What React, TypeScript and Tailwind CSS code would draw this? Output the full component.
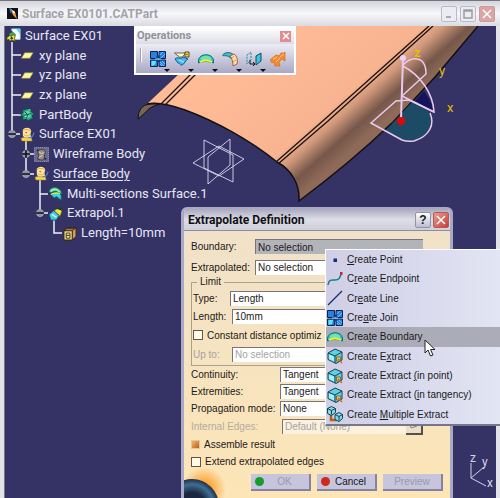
import React from "react"

type IconProps = { kind: string; className?: string };

// Small 16x16 drawings shared by the tree, the toolbar and the context menu
const Icon = ({ kind, className = "h-4 w-4" }: IconProps) => (
  <svg viewBox="0 0 16 16" className={`${className} shrink-0`} fill="none" aria-hidden="true">
    {kind === "part" && (
      <>
        <path d="M6 1h9v11H9z" fill="#fff" stroke="#9fe8f0" />
        <path d="M11 1h4v6z" fill="#5bd6e6" />
        <path d="M3 6l4-2 3 3-2 3-4 0z" fill="#3fae5c" stroke="#14402a" strokeWidth=".6" />
        <path d="M1 10l3-2 2 1 1-2 3 1-1 3 1 3-4-1-2 1-1-2-2 1z" fill="#e8e038" stroke="#45460c" strokeWidth=".8" />
        <circle cx="6" cy="11" r="1.3" fill="#2f3160" />
      </>
    )}
    {kind === "plane" && <path d="M5 5h9l-3.500 6H1.500z" fill="#fbf79a" stroke="#8e8c3a" strokeWidth=".7" />}
    {kind === "body" && (
      <>
        <path d="M7 1l2 2 3-1 0 3 3 2-2 2 1 4-3 0-2 2-2-2-4 1 0-4-2-2 2-2 0-4 3 1z" fill="#28a582" stroke="#0c4644" />
        <path d="M5 5l4-1 3 3-1 4-4 1-3-4z" fill="#59d9a8" />
        <path d="M5 5l3 3 4-1M8 8l-1 4M8 8l-4 1" stroke="#123f4a" />
        <path d="M9 3h2M5 10h2" stroke="#c4f59b" />
      </>
    )}
    {kind === "geoset" && (
      <>
        <path d="M3 3c2-3 8-3 9 1l-1 4c1 1 1 4-1 6H3c2-2 1-4 0-5z" fill="#fbe7a1" />
        <path d="M3 4c3-2 6-2 9 1M4 8c2 2 5 2 7 0" stroke="#e9a83b" />
        <path d="M5 6l2-1 1 2z" fill="#da473d" />
        <path d="M1 12c3-2 7 1 11-1l1 4H2z" fill="#f7d94a" stroke="#8d7532" strokeWidth=".6" />
        <path d="M9 11c3 1 5-1 6-5" stroke="#4f83d6" strokeWidth="1.300" />
      </>
    )}
    {kind === "wireframe" && (
      <>
        <rect x=".5" y=".5" width="15" height="15" fill="#69698f" stroke="#a6a6c0" strokeDasharray="1 1" />
        <path d="M4 5c1-3 7-3 8 0l-1 5c1 2-1 4-3 4l-4-1 1-4z" fill="#9a8a86" stroke="#38364f" />
        <path d="M5 5l3 2 3-1M5 11l4-2" stroke="#e6d4b0" />
        <path d="M3 3l2 1M11 12l2 1" stroke="#1e1d3c" strokeWidth="1.500" />
      </>
    )}
    {kind === "sections" && (
      <>
        <path d="M1 6c2-6 11-6 14 2l-4-1c-2-2-5-2-7 0z" fill="#8af0a0" stroke="#0f6a78" />
        <path d="M4 10c2-4 8-4 10 0v5l-3-2c-1-2-3-2-4 0z" fill="#43d5dd" stroke="#0f6a78" />
        <path d="M3 9c3-2 7-2 10-1" stroke="#eef84e" strokeWidth="1.300" />
      </>
    )}
    {kind === "extrapol" && (
      <>
        <path d="M5 6l6-4 4 3-2 6-6 0z" fill="#efe43a" stroke="#56520c" strokeWidth=".7" />
        <path d="M9 3l2-2 3 1 1 3z" fill="#1d3f1c" />
        <path d="M1 9l5-4 6 5-3 5-6 0z" fill="#44cbe0" stroke="#164a78" />
        <path d="M4 9l5 3" stroke="#d7fbff" strokeWidth="1.500" />
      </>
    )}
    {kind === "param" && (
      <>
        <path d="M2 5l4-3h9v9l-4 4H2z" fill="#c99a68" stroke="#33230f" />
        <path d="M2 5h9v10M11 5l4-3M5 3h8" stroke="#33230f" />
        <path d="M3 6h7v8H3z" fill="#ece69a" />
        <path d="M4.500 7.500h4v5.500h-4zM4.500 10h4" stroke="#3f3711" />
      </>
    )}
    {kind === "join" && (
      <>
        <path d="M.5.500h7v7h-7zM9 .5h6.500v7H9zM.5 9h7v6.500h-7zM9 9h6.500v6.500H9z" fill="#2a80dc" stroke="#0a2450" />
        <path d="M1.500 10h4.500l-1 4-3.500 1z" fill="#5beaf5" />
        <path d="M10 4l3-3M11 7l4-4M10 11l4 4M12 10l3 3M10 13l2 2" stroke="#62c6f4" />
        <path d="M8 4l2 2-2 2-2-2zM8 8l2 2-2 2-2-2z" fill="#0b3f8a" />
        <path d="M5 8h6" stroke="#cfeaff" strokeWidth=".8" />
      </>
    )}
    {kind === "split" && (
      <>
        <path d="M1 8c3-3 5 1 8-2l5 2c-3 1-3 5-6 6-2 1-3-3-4-2z" fill="#48b9e8" stroke="#155aa0" />
        <path d="M5 9l5 2" stroke="#baf1ff" />
        <path d="M.5 2h11l-3 4-3 0z" fill="#fff7cf" stroke="#4b4930" strokeWidth=".8" />
        <path d="M11 1h4v5h-4z" fill="#e9d54d" stroke="#4b4200" strokeWidth=".9" />
        <path d="M12.500 3h1v1h-1z" fill="#222" />
      </>
    )}
    {kind === "boundary" && (
      <>
        <path d="M.5 12V9c1-7 14-7 15 0v3c-4-2-11-2-15 0z" fill="#32c6cf" stroke="#11707e" />
        <path d="M3 7c3-3 7-3 10 0v2H3z" fill="#74e59f" />
        <path d="M2 11c4-2 8-2 12 0" stroke="#f2ee3c" strokeWidth="2" />
      </>
    )}
    {kind === "extractCurve" && (
      <>
        <path d="M.5 4c4-4 9-3 12 1l-4 2c-2-2-5-3-7-2z" fill="#37bfd1" stroke="#26505b" strokeWidth=".8" />
        <path d="M8 5l4-2c3 2 4 6 3 10l-4 2c0-4-1-8-3-10z" fill="#f8e5a2" stroke="#a03a3a" strokeWidth=".8" />
        <path d="M12 5l-2 2M14 9l-3 2" stroke="#d69b62" />
      </>
    )}
    {kind === "translate" && (
      <>
        <path d="M1 4l4-3v8l-4 4z" stroke="#2d8aa3" strokeDasharray="2 1" />
        <path d="M10 5l5-3v8l-5 4z" fill="#3fc5dd" stroke="#134a5a" />
        <path d="M4 9v4h4M7 11l2 2-2 2" stroke="#111" />
      </>
    )}
    {kind === "orange" && (
      <>
        <path d="M0 9l6-5 3 1 2-3h3l1-1 0 9-3-2-3 3 1 4-5 0-1-4-2 1z" fill="#f58a2e" stroke="#d96a18" strokeWidth=".7" />
        <path d="M3 8l4-2M6 11l4-4M10 6l4-3" stroke="#ffc88a" />
      </>
    )}
    {kind === "point" && <path d="M6.500 6.500h3.500v3.500h-3.500z" fill="#0c2f78" />}
    {kind === "endpoint" && (
      <>
        <path d="M1 14c1-6 4-5 7-5 4 0 5-2 6-6" stroke="#15808a" strokeWidth="1.500" />
        <path d="M13 1h2.500v3H13z" fill="#d02036" />
      </>
    )}
    {kind === "line" && <path d="M1 15L15 1" stroke="#0e2c70" strokeWidth="1.300" />}
    {kind === "extract" && (
      <>
        <path d="M1 5l7-4 7 3v8l-6 3.500-8-4z" fill="#62cfe0" stroke="#17424e" />
        <path d="M1 5l7 3 7-4M8 8v7" stroke="#17424e" />
        <path d="M2 6.500l5 2v5l-5-2.500z" fill="#a6eef5" />
        <path d="M9.500 9h4v4h-4z" fill="#e8c66a" stroke="#6b4d19" strokeWidth=".7" />
        <path d="M11 11l4 4" stroke="#c8702c" strokeWidth="1.600" />
      </>
    )}
    {kind === "multi" && (
      <>
        <path d="M4 8v6h6" stroke="#b35f1d" strokeWidth="2.500" />
        <path d="M.5 2.500l4-2 4 2v4l-4 3-4-2z" fill="#7fdbe9" stroke="#17424e" />
        <path d="M.5 2.500l4 2 4-2M4.500 4.500v4" stroke="#17424e" />
        <path d="M8 8.500l4-2 3.500 2v4l-3.500 3-4-2z" fill="#7fdbe9" stroke="#17424e" />
        <path d="M8 8.500l4 2 3.500-2M12 10.500v4" stroke="#17424e" />
      </>
    )}
  </svg>
);

const treeItems = [
  { label: "Surface EX01", icon: "part", indent: "pl-px" },
  { label: "xy plane", icon: "plane", indent: "pl-[15px]" },
  { label: "yz plane", icon: "plane", indent: "pl-[15px]" },
  { label: "zx plane", icon: "plane", indent: "pl-[15px]" },
  { label: "PartBody", icon: "body", indent: "pl-[15px]" },
  { label: "Surface EX01", icon: "geoset", indent: "pl-[15px]" },
  { label: "Wireframe Body", icon: "wireframe", indent: "pl-[29px]" },
  { label: "Surface Body", icon: "geoset", indent: "pl-[29px]", active: true },
  { label: "Multi-sections Surface.1", icon: "sections", indent: "pl-[43px]" },
  { label: "Extrapol.1", icon: "extrapol", indent: "pl-[43px]" },
  { label: "Length=10mm", icon: "param", indent: "pl-[57px]" },
];

// "key" is the position of the underlined access letter
const menuItems = [
  { label: "Create Point", icon: "point", key: 0 },
  { label: "Create Endpoint", icon: "endpoint", key: 1 },
  { label: "Create Line", icon: "line", key: 2 },
  { label: "Create Join", icon: "join", key: 3 },
  { label: "Create Boundary", icon: "boundary", key: 4, active: true },
  { label: "Create Extract", icon: "extract", key: 8 },
  { label: "Create Extract (in point)", icon: "extract", key: 15 },
  { label: "Create Extract (in tangency)", icon: "extract", key: 16 },
  { label: "Create Multiple Extract", icon: "multi", key: 7 },
];

const tools = ["join", "split", "boundary", "extractCurve", "translate", "orange"];

const Scene = () => (
  <svg viewBox="5 26 491 472" className="absolute left-0 top-0 h-[472px] w-[491px]" fill="none" aria-hidden="true">
    <defs>
      <linearGradient id="skin" gradientUnits="userSpaceOnUse" x1="132" y1="150" x2="228" y2="259">
        <stop offset="0" stopColor="#ffbb96" />
        <stop offset=".69" stopColor="#f8b391" />
        <stop offset=".78" stopColor="#cf987b" />
        <stop offset=".9" stopColor="#76574a" />
        <stop offset="1" stopColor="#8f6a58" />
      </linearGradient>
    </defs>

    {/* Extruded surface */}
    <path d="M147 104L230 26H478L435 77L393 122Q350 163 299 201C300 185 292 170 277 162C250 140 215 121 185 110Q160 101 147 104z" fill="url(#skin)" />
    <path d="M138 119Q138 105 150 104L160 104Q149 107 146 112z" fill="#7b6454" stroke="#111" />
    <path d="M147 104Q160 101 185 110C215 121 250 140 277 162C292 170 300 185 299 201Q350 163 393 122L435 77L478 26" stroke="#111" strokeWidth="1.500" />
    <path d="M429 26L325 119L276 162M433 26L328 121L278 164M191 74L161 104M196 74L165 105" stroke="#1c120e" strokeWidth="1.300" />

    {/* Reference planes */}
    <path d="M204 140L233 155V182L204 168zM230 139V165L208 184V157zM193 163L219 146L244 159L219 176z" stroke="#d9d9ee" strokeWidth=".9" />

    {/* Compass */}
    <path d="M389 127L413 101Q432 109 432 121Q430 136 414 141Q407 142 402 140L386 131z" fill="#1d4a64" />
    <path d="M415 101L424 91Q432 102 434 112z" fill="#15135c" />
    <g stroke="#eac9ef" strokeWidth="1.500">
      <path d="M403 58L401 119" strokeWidth="2" />
      <path d="M403 65C407 61 412 58 417 59C424 60 426 66 426 74L402 96" />
      <path d="M403 66C420 75 433 93 434 112L402 96" />
      <path d="M434 112L409 100L396 101L371 123L402 140Q407 142 414 141C430 136 435 124 430 113" />
    </g>
    <circle cx="403" cy="58" r="3" fill="#e9d0f5" />
    <circle cx="401" cy="121" r="4" fill="#dc0808" />
    <g fill="#e3bb08" fontFamily="Roboto, sans-serif" fontSize="13">
      <text x="414" y="57" fontWeight="700">z</text>
      <text x="439" y="75">y</text>
      <text x="447" y="112">x</text>
    </g>

    {/* Axis system */}
    <path d="M471 463V478L484 467M471 478L486 486" stroke="#d4d4e8" />
    <g fill="#d4d4e8" fontFamily="Roboto, sans-serif" fontSize="12">
      <text x="470" y="462">z</text>
      <text x="482" y="466">y</text>
      <text x="487" y="487">x</text>
    </g>

    {/* Tree connectors */}
    <path d="M12 42V134M12 55h9M12 75h9M12 95h9M12 115h9M12 134h8M26 140V174M26 154h8M26 174h8M40 180V213M40 194h8M40 213h8M54 219V233h8" stroke="#f0f0f8" strokeWidth="1.500" />
    <g fill="#8f8fa6" stroke="#a9a9ba">
      <circle cx="12" cy="134" r="3.500" />
      <circle cx="26" cy="154" r="3.500" />
      <circle cx="26" cy="174" r="3.500" />
      <circle cx="40" cy="213" r="3.500" />
    </g>
    <path d="M8 134h8M22 154h8M26 150v8M22 174h8M36 213h8" stroke="#101018" strokeWidth="1.500" />
  </svg>
);

const Toolbar = () => (
  <section className="absolute left-[129px] top-0 w-[162px] border-2 border-white bg-[#e4e4ec]">
    <header className="flex h-4 items-center justify-between bg-gradient-to-b from-white to-[#dcdce6] pr-[3px] pl-px">
      <h2 className="text-[11px] leading-4 font-bold text-[#929298]">Operations</h2>
      <button aria-label="Close toolbar" className="flex h-[11px] w-[11px] items-center justify-center bg-[#e08d8f] text-white">
        <svg viewBox="0 0 8 8" className="h-2 w-2" stroke="currentColor" strokeWidth="1.5"><path d="M1 1l6 6M7 1l-6 6" /></svg>
      </button>
    </header>
    <div className="flex h-[29px] items-center gap-2 bg-gradient-to-b from-[#ededf6] to-[#a9a9c4] pl-1">
      <span className="mb-2 h-[14px] w-[2px] border-r border-white bg-[#a0a0b4]" />
      {tools.map((tool) => (
        <button key={tool} aria-label={tool} className="relative h-4 w-4">
          <Icon kind={tool} />
          {tool !== "orange" && (
            <svg viewBox="0 0 6 3" className="absolute -right-1 -bottom-[5px] h-[3px] w-[6px]"><path d="M0 0h6L3 3z" fill="#08081c" /></svg>
          )}
        </button>
      ))}
    </div>
  </section>
);

const fieldStyle = "h-[15px] min-w-0 flex-1 appearance-none border-t border-l border-[#77757c] px-[2px] leading-[14px] outline-none disabled:text-[#a5a3a3] disabled:opacity-100";

const Dialog = () => (
  <section className="absolute bottom-0 left-[176px] top-[181px] flex w-[272px] flex-col overflow-hidden rounded-t-md border-x-[3px] border-t-2 border-[#a9a8c6] bg-gradient-to-b from-[#efe1ca] to-[#fde5b6] font-['Liberation_Sans',sans-serif] text-[10px] text-[#1c1a1a]">
    <header className="flex h-[22px] shrink-0 items-center gap-[2px] border-b border-[#8d8ca4] bg-gradient-to-b from-[#a9a9bd] via-[#dedee8] to-[#ceced9] pr-px pl-1">
      <h2 className="flex-1 font-[Roboto,sans-serif] text-[12px] font-bold text-[#101014]">Extrapolate Definition</h2>
      <button aria-label="Help" className="h-4 w-4 rounded-xs border border-[#9292aa] bg-gradient-to-b from-white to-[#bcbcd2] text-[12px] leading-[14px] font-bold">?</button>
      <button aria-label="Close" className="flex h-4 w-4 items-center justify-center rounded-xs border border-[#b35b58] bg-gradient-to-br from-[#e99a92] to-[#c63a35] text-white">
        <svg viewBox="0 0 10 10" className="h-[10px] w-[10px]" stroke="currentColor" strokeWidth="1.5"><path d="M1 1l8 8M9 1l-8 8" /></svg>
      </button>
    </header>

    {/* Globe in the corner */}
    <svg viewBox="0 0 44 34" className="absolute bottom-0 left-0 h-[34px] w-[44px]" aria-hidden="true">
      <defs>
        <radialGradient id="glow"><stop offset=".3" stopColor="#fba637" /><stop offset="1" stopColor="#fba637" stopOpacity="0" /></radialGradient>
        <radialGradient id="globe"><stop offset=".5" stopColor="#1b2740" /><stop offset=".8" stopColor="#3f6f92" /><stop offset="1" stopColor="#1d2e48" /></radialGradient>
      </defs>
      <circle cx="20" cy="25" r="22" fill="url(#glow)" />
      <circle cx="8" cy="42" r="27" fill="url(#globe)" />
    </svg>

    <form className="relative flex flex-1 flex-col pt-[5px] pr-[27px] pl-[7px]">
      <div className="flex h-[21px] items-center">
        <label htmlFor="boundary" className="w-[64px]">Boundary:</label>
        <input id="boundary" readOnly defaultValue="No selection" className={`${fieldStyle} bg-[#b3b3ba]`} />
      </div>
      <div className="flex h-5 items-center">
        <label htmlFor="extrapolated" className="w-[64px]">Extrapolated:</label>
        <input id="extrapolated" readOnly defaultValue="No selection" className={`${fieldStyle} bg-white`} />
      </div>
      <fieldset className="h-[89px] border border-[#aaa190] pl-px">
        <legend className="ml-1 px-[3px] leading-[10px]">Limit</legend>
        <div className="mt-[2px] flex h-[18px] items-center">
          <label htmlFor="type" className="w-[37px]">Type:</label>
          <select id="type" className={`${fieldStyle} bg-white`}><option>Length</option></select>
        </div>
        <div className="flex h-[18px] items-center">
          <label htmlFor="length" className="w-[39px]">Length:</label>
          <input id="length" defaultValue="10mm" className={`${fieldStyle} bg-white`} />
        </div>
        <label className="flex h-5 items-center gap-1 whitespace-nowrap">
          <input type="checkbox" className="h-[10px] w-[10px] shrink-0 appearance-none border border-[#5c584f] bg-[#fffbe4]" />
          Constant distance optimiz
        </label>
        <div className="flex h-[18px] items-center">
          <label htmlFor="upto" className="w-[39px] text-[#a5a3a3]">Up to:</label>
          <input id="upto" disabled defaultValue="No selection" className={`${fieldStyle} bg-white`} />
        </div>
      </fieldset>
      <div className="flex h-[17px] items-center">
        <label htmlFor="continuity" className="w-[89px]">Continuity:</label>
        <select id="continuity" className={`${fieldStyle} bg-white`}><option>Tangent</option></select>
      </div>
      <div className="flex h-[17px] items-center">
        <label htmlFor="extremities" className="w-[89px]">Extremities:</label>
        <select id="extremities" className={`${fieldStyle} bg-white`}><option>Tangent</option></select>
      </div>
      <div className="flex h-4 items-center">
        <label htmlFor="propagation" className="w-[89px] whitespace-nowrap">Propagation mode:</label>
        <select id="propagation" className={`${fieldStyle} bg-white`}><option>None</option></select>
      </div>
      <div className="flex h-5 items-center">
        <label htmlFor="edges" className="w-[91px] text-[#b3aca0]">Internal Edges:</label>
        <input id="edges" disabled defaultValue="Default (None)" className={`${fieldStyle} bg-[#fbf1dc]`} />
        <button type="button" aria-label="Edit internal edges" className="h-[17px] w-[17px] border-r-2 border-b-2 border-[#55514a] bg-[#eadfc8] pl-[2px]">
          <svg viewBox="0 0 10 10" className="h-[10px] w-[10px]" fill="none" stroke="#8a8478"><path d="M2 3l6-1 1 4-6 2zM2 5l5 1" /></svg>
        </button>
      </div>
      <label className="flex h-[17px] items-center gap-1">
        <input type="checkbox" defaultChecked className="h-[9px] w-[9px] appearance-none border border-[#e6c79a] checked:bg-gradient-to-br checked:from-[#f5b56a] checked:to-[#bd5d14]" />
        Assemble result
      </label>
      <label className="flex h-[17px] items-center gap-1">
        <input type="checkbox" className="h-[10px] w-[10px] appearance-none border border-[#5c584f] bg-[#fffbe4]" />
        Extend extrapolated edges
      </label>
    </form>

    <footer className="relative flex shrink-0 justify-end gap-[6px] pr-[7px] pb-[7px]">
      <DialogButton label="OK" dot="bg-[#149c2c]" muted />
      <DialogButton label="Cancel" dot="bg-[#d0281c]" />
      <DialogButton label="Preview" muted />
    </footer>
  </section>
);

const DialogButton = ({ label, dot, muted }: { label: string; dot?: string; muted?: boolean }) => (
  <button
    type="button"
    disabled={muted}
    className="flex h-[17px] w-[60px] items-center border-r-2 border-b-2 border-[#8383a6] bg-[#c6c5db] px-1 leading-[14px] text-[#16161c] disabled:text-[#9999ae]"
  >
    {dot && <span className={`h-[9px] w-[9px] rounded-full ${dot}`} />}
    <span className="flex-1">{label}</span>
  </button>
);

const ContextMenu = () => (
  <ul role="menu" className="absolute left-[325px] top-[248px] right-0 grid h-[177px] auto-rows-fr border-t border-l border-b-2 border-t-white border-l-white border-b-[#77778c] bg-gradient-to-r from-[#cfcee6] to-[#e2e5f3] font-['Liberation_Sans',sans-serif]">
    {menuItems.map(({ label, icon, key, active }) => (
      <li key={label} role="none" className="flex">
        <button role="menuitem" className={`flex flex-1 items-center gap-1 pl-px text-left text-[10px] whitespace-nowrap text-[#1a1a22] ${active ? "bg-[#acacb8]" : ""}`}>
          <Icon kind={icon} />
          <span>
            {label.slice(0, key)}
            <span className="underline">{label[key]}</span>
            {label.slice(key + 1)}
          </span>
        </button>
      </li>
    ))}
  </ul>
);

const WindowButton = ({ label, path, className }: { label: string; path: string; className: string }) => (
  <button aria-label={label} className={`flex h-4 w-4 items-center justify-center rounded-xs border ${className}`}>
    <svg viewBox="0 0 12 12" className="h-3 w-3" fill="none" stroke="currentColor" strokeWidth="1.5"><path d={path} /></svg>
  </button>
);

const App = () => {
  return (
    <div className="relative flex min-h-screen flex-col overflow-hidden border-t border-[#77757c] bg-[#e2e2e9] font-[Roboto,'Liberation_Sans',sans-serif]">
      <header className="flex h-[25px] items-center gap-[3px] bg-gradient-to-b from-[#d4d4de] via-[#f8f8fb] to-[#dadae2] pr-[5px] pl-[7px]">
        <svg viewBox="0 0 11 11" className="mr-px h-[11px] w-[11px]" aria-hidden="true">
          <path d="M0 0h11v11H0z" fill="#101018" />
          <path d="M3 0l5 4 2 7-4-4z" fill="#f39a3d" />
          <path d="M2 0l3 2-1 4z" fill="#3a83c8" />
          <path d="M5 2l3 2-1 2z" fill="#fff" />
        </svg>
        <h1 className="flex-1 text-[12px] font-bold text-[#a3a3a9]">Surface EX0101.CATPart</h1>
        <WindowButton label="Minimize" path="M3 9h5" className="border-[#b9b9c8] bg-[#ececf2] text-[#94949c]" />
        <WindowButton label="Maximize" path="M2 2h8v8H2zM2 3h8" className="border-[#b9b9c8] bg-[#ececf2] text-[#9c9ca4]" />
        <WindowButton label="Close" path="M2 2l8 8M10 2l-8 8" className="border-[#c99a9e] bg-[#dba5a8] text-white" />
      </header>

      <main className="relative mr-1 ml-1 flex-1 overflow-hidden border-l border-[#77778a] bg-[#353266]">
        <Scene />
        <ul className="relative grid h-[217px] w-fit auto-rows-fr text-[13px] text-[#e6e6f2]">
          {treeItems.map(({ label, icon, indent, active }, i) => (
            <li key={i} className={`flex items-center gap-1 leading-4 ${indent}`}>
              <Icon kind={icon} className="h-[15px] w-[15px]" />
              <span className={active ? "underline underline-offset-2" : ""}>{label}</span>
            </li>
          ))}
        </ul>
        <Toolbar />
        <Dialog />
      </main>

      <ContextMenu />

      {/* Mouse pointer */}
      <svg viewBox="0 0 12 18" className="absolute left-[424px] top-[338px] h-[18px] w-3" aria-hidden="true">
        <path d="M1 1v13l3-3 2.500 6 2.500-1-2.500-5.500H11z" fill="#fff" stroke="#222" />
      </svg>
    </div>
  )
}

export default App;
